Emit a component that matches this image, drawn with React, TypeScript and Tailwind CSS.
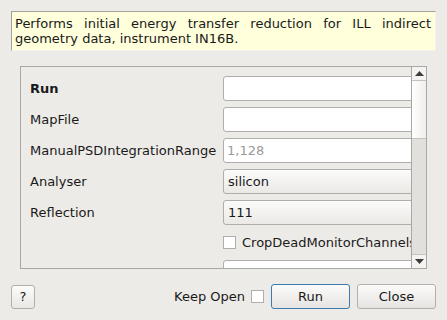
const rows = [
  { label: "Run", kind: "input", bold: true, value: "" },
  { label: "MapFile", kind: "input", value: "" },
  { label: "ManualPSDIntegrationRange", kind: "input", value: "1,128", placeholder: true },
  { label: "Analyser", kind: "combo", value: "silicon" },
  { label: "Reflection", kind: "combo", value: "111" },
];

export default function App() {
  return (
    <div className="w-[447px] h-[320px] bg-[#edebe7] overflow-hidden text-[13px] text-[#1a1a1a] font-['DejaVu_Sans',sans-serif] flex flex-col">
      {/* Description */}
      <div className="mt-[11px] mx-[11px] h-[40px] bg-[#ffffdc] border-t border-l border-[#a3a19d] border-r border-r-[#f4f2ee] border-b border-b-[#f4f2ee] pl-[3px] pr-[4px] pt-[4px] leading-[15px] text-justify">
        Performs initial energy transfer reduction for ILL indirect geometry data, instrument IN16B.
      </div>

      {/* Property scroll area */}
      <div className="mt-[15px] ml-[20px] mr-[20px] h-[203px] border border-[#aaa8a4] flex">
        <div className="flex-1 overflow-hidden">
          <div className="w-[420px] pt-[9px] pl-[9px] flex flex-col gap-[6px]">
            {rows.map((r) => (
              <div key={r.label} className="flex items-center h-[25px]">
                <span className={`w-[193px] shrink-0 ${r.bold ? "font-bold" : ""}`}>{r.label}</span>
                {r.kind === "input" ? (
                  <div
                    className={`w-[200px] h-[25px] bg-white border border-[#b0aeaa] rounded-[3px] flex items-center pl-[3px] ${
                      r.placeholder ? "text-[#9a9a9a]" : ""
                    }`}
                  >
                    {r.value}
                  </div>
                ) : (
                  <div className="w-[200px] h-[25px] bg-gradient-to-b from-[#fbfbfa] to-[#ebe9e6] border border-[#b0aeaa] rounded-[3px] flex items-center pl-[4px]">
                    {r.value}
                  </div>
                )}
              </div>
            ))}
            <div className="flex items-center h-[23px]">
              <span className="w-[193px] shrink-0"></span>
              <span className="w-[13px] h-[13px] bg-white border border-[#b0aeaa] shrink-0"></span>
              <span className="ml-[6px] whitespace-nowrap">CropDeadMonitorChannels</span>
            </div>
            <div className="flex items-center h-[25px]">
              <span className="w-[193px] shrink-0"></span>
              <div className="w-[200px] h-[25px] bg-white border border-[#b0aeaa] rounded-[3px]"></div>
            </div>
          </div>
        </div>
        {/* Scrollbar */}
        <div className="w-[15px] border-l border-[#aaa8a4] flex flex-col">
          <div className="h-[14px] border-b border-[#c4c2be] bg-[#f4f3f1] flex items-center justify-center">
            <svg width="9" height="5" viewBox="0 0 9 5">
              <path d="M4.5 0 L9 5 L0 5 Z" fill="#3c3c3c" />
            </svg>
          </div>
          <div className="h-[58px] bg-gradient-to-r from-white to-[#efeeec] border-b border-[#c4c2be]"></div>
          <div className="flex-1 bg-[#e2e0dd]"></div>
          <div className="h-[14px] border-t border-[#c4c2be] bg-[#f4f3f1] flex items-center justify-center">
            <svg width="9" height="5" viewBox="0 0 9 5">
              <path d="M0 0 L9 0 L4.5 5 Z" fill="#3c3c3c" />
            </svg>
          </div>
        </div>
      </div>

      {/* Buttons */}
      <div className="mt-[15px] mx-[11px] flex items-center h-[25px]">
        <button className="w-[24px] h-[24px] rounded-[3px] border border-[#b2b0ac] bg-gradient-to-b from-[#fbfbfa] to-[#e9e7e4] flex items-center justify-center">
          ?
        </button>
        <div className="flex-1"></div>
        <span>Keep Open</span>
        <span className="ml-[6px] w-[13px] h-[13px] bg-white border border-[#b0aeaa]"></span>
        <button className="ml-[7px] w-[79px] h-[25px] rounded-[3px] border border-[#3a7bb0] bg-gradient-to-b from-[#fbfbfa] to-[#e6e4e1]">
          Run
        </button>
        <button className="ml-[7px] w-[79px] h-[25px] rounded-[3px] border border-[#b2b0ac] bg-gradient-to-b from-[#fbfbfa] to-[#e6e4e1]">
          Close
        </button>
      </div>
    </div>
  );
}
